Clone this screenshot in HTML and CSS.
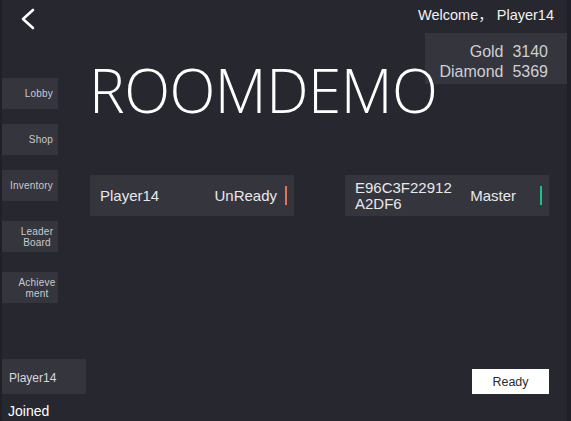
FILE: index.html
```html
<!DOCTYPE html>
<html>
<head>
<meta charset="utf-8">
<link rel="stylesheet" href="styles.css">
</head>
<body>
<div class="screen">
  <header class="topbar">
    <svg class="back" width="16" height="22" viewBox="0 0 16 22"><polyline points="13,2 3,11 13,20" fill="none" stroke="#fff" stroke-width="2.6" stroke-linecap="round" stroke-linejoin="round"/></svg>
    <div class="welcome">Welcome，&nbsp;Player14</div>
  </header>
  <div class="middle">
    <nav class="sidebar">
      <div class="nav-btn">Lobby</div>
      <div class="nav-btn">Shop</div>
      <div class="nav-btn">Inventory</div>
      <div class="nav-btn two">Leader<br>Board</div>
      <div class="nav-btn two">Achieve<br>ment</div>
    </nav>
    <main class="content">
      <div class="hero">
        <h1 class="title">ROOMDEMO</h1>
        <div class="wallet">
          <div>Gold&nbsp; 3140</div>
          <div>Diamond&nbsp; 5369</div>
        </div>
      </div>
      <div class="players">
        <div class="player">
          <span class="pname">Player14</span>
          <span class="pstate">UnReady</span>
          <span class="mark red"></span>
        </div>
        <div class="player">
          <span class="pname id">E96C3F22912<br>A2DF6</span>
          <span class="pstate">Master</span>
          <span class="mark green"></span>
        </div>
      </div>
    </main>
  </div>
  <footer class="bottom">
    <div class="me">
      <div class="me-name">Player14</div>
      <div class="joined">Joined</div>
    </div>
    <button class="ready">Ready</button>
  </footer>
</div>
</body>
</html>
```
FILE: styles.css
```css
* { box-sizing: border-box; }
html, body { margin: 0; padding: 0; }
body {
  width: 571px;
  height: 421px;
  overflow: hidden;
  background: #27272f;
  font-family: "Liberation Sans", "Noto Sans CJK SC", Arial, sans-serif;
  color: #e6e6e6;
}
.screen {
  height: 421px;
  display: flex;
  flex-direction: column;
  border-left: 2px solid #202027;
  border-right: 4px solid #202027;
}
.topbar {
  height: 33px;
  flex-shrink: 0;
  display: flex;
  justify-content: space-between;
  align-items: flex-start;
}
.back { margin: 8px 0 0 18px; }
.welcome {
  font-size: 14.5px;
  margin: 3px 13px 0 0;
  color: #f2f2f2;
  white-space: nowrap;
}
.middle {
  flex: 1;
  display: flex;
  min-width: 0;
}
.sidebar {
  width: 56px;
  flex-shrink: 0;
  padding-top: 45px;
  display: flex;
  flex-direction: column;
}
.nav-btn {
  height: 31px;
  background: #35353e;
  color: #cacace;
  font-size: 10px;
  padding-right: 5px;
  display: flex;
  align-items: center;
  justify-content: flex-end;
  text-align: right;
  margin-bottom: 15px;
  line-height: 11px;
  letter-spacing: 0.2px;
}
.nav-btn:nth-child(3) { margin-bottom: 20px; }
.nav-btn:nth-child(4) { margin-bottom: 20px; }
.nav-btn.two { text-align: center; justify-content: center; padding: 0 0 0 14px; }
.content {
  flex: 1;
  min-width: 0;
  display: flex;
  flex-direction: column;
}
.hero {
  display: flex;
  align-items: flex-start;
  height: 142px;
}
.title {
  flex: 1;
  min-width: 0;
  margin: 22px 0 0 31px;
  font-family: "Open Sans", "Noto Sans", sans-serif;
  font-weight: 300;
  font-size: 60px;
  line-height: 70px;
  color: #ffffff;
  letter-spacing: -0.5px;
  white-space: nowrap;
  position: relative;
  z-index: 1;
}
.wallet {
  flex-shrink: 0;
  width: 142px;
  height: 51px;
  background: #35353e;
  color: #cfcfd3;
  font-size: 16px;
  text-align: right;
  padding: 9px 19px 0 0;
  line-height: 20px;
  white-space: nowrap;
}
.players {
  display: flex;
  gap: 51px;
  padding-left: 32px;
}
.player {
  width: 204px;
  flex-shrink: 0;
  height: 41px;
  background: #35353e;
  display: flex;
  align-items: center;
  padding: 0 7px 0 10px;
  font-size: 15px;
  color: #e8e8ea;
}
.pname { flex: 1; }
.pname.id { line-height: 16px; }
.pstate { margin-right: 8px; }
.player:nth-child(2) .pstate { margin-right: 24px; }
.mark { width: 2px; height: 19px; }
.mark.red { background: #e0735c; }
.mark.green { background: #21c08a; }
.bottom {
  height: 62px;
  flex-shrink: 0;
  display: flex;
  justify-content: space-between;
  align-items: flex-start;
}
.me-name {
  width: 84px;
  height: 35px;
  background: #35353e;
  color: #d8d8dc;
  font-size: 12px;
  padding: 12px 0 0 7px;
}
.joined {
  font-size: 14px;
  color: #ffffff;
  padding: 9px 0 0 6px;
}
.ready {
  margin: 10px 18px 0 0;
  width: 77px;
  height: 25px;
  border: none;
  background: #ffffff;
  color: #2a2a2a;
  font-family: "Liberation Sans", Arial, sans-serif;
  font-size: 12.5px;
  padding: 0;
}
```
